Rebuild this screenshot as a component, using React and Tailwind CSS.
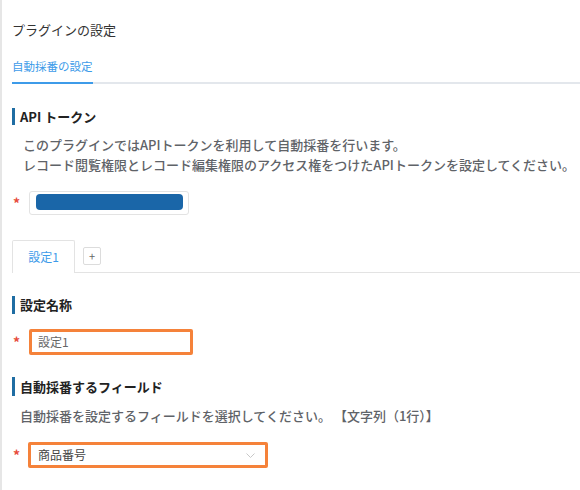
import React from 'react'

const font = { fontFamily: '"Noto Sans CJK JP", "Noto Sans", sans-serif' }

const Heading = ({ children, className = '' }) => (
  <div className={`border-l-[3px] border-[#1f6da3] pl-[5px] text-[13px] font-bold leading-[18px] text-[#222] ${className}`}>
    {children}
  </div>
)

const Required = () => (
  <span className="w-[17px] pl-[1px] text-[14px] font-bold leading-none text-[#e74c3c]">*</span>
)

const App = () => {
  return (
    <div className="min-h-[490px] w-[580px] overflow-hidden border-l-2 border-[#e6e6e6] bg-white pl-[10px]" style={font}>
      <div className="pt-[20px] text-[13px] leading-[20px] text-[#333]">プラグインの設定</div>

      <div className="mt-[16px] flex border-b-2 border-[#e3e7ec]">
        <div className="-mb-[2px] border-b-2 border-[#3d9be9] pb-[6px] text-[11.5px] leading-[20px] text-[#3d9be9]">
          自動採番の設定
        </div>
      </div>

      <Heading className="mt-[24px] h-[17px] leading-[17px]">API トークン</Heading>
      <div className="mt-[10px] ml-[11px] text-[13px] font-medium leading-[20px] text-[#5f6368]">
        <p>このプラグインではAPIトークンを利用して自動採番を行います。</p>
        <p>レコード閲覧権限とレコード編集権限のアクセス権をつけたAPIトークンを設定してください。</p>
      </div>

      <div className="mt-[16px] flex items-center">
        <Required />
        <div className="h-[24px] w-[160px] rounded-[3px] border border-[#e3e3e3] py-[2px] pl-[6px]">
          <div className="h-[16px] w-[147px] rounded-[4px] bg-[#1a66a8]" />
        </div>
      </div>

      <div className="mt-[25px] flex items-center gap-[8px] border-b border-[#e3e3e3]">
        <div className="-mb-px flex h-[33px] w-[63px] items-center justify-center rounded-t-[2px] border border-b-0 border-[#e3e3e3] bg-white text-[12px] text-[#3d9be9]">
          設定1
        </div>
        <button className="flex h-[18px] w-[18px] items-center justify-center rounded-[2px] border border-[#dcdcdc] text-[11px] leading-none text-[#666]">
          +
        </button>
      </div>

      <Heading className="mt-[23px]">設定名称</Heading>
      <div className="mt-[15px] flex items-center">
        <Required />
        <div className="flex h-[26px] w-[164px] items-center rounded-[2px] border-[3px] border-[#f5823a] pl-[6px] text-[12px] text-[#666]">
          設定1
        </div>
      </div>

      <Heading className="mt-[22px] h-[19px] leading-[19px]">自動採番するフィールド</Heading>
      <div className="mt-[10px] ml-[8px] text-[13px] font-medium leading-[20px] text-[#5f6368]">
        自動採番を設定するフィールドを選択してください。 【文字列（1行）】
      </div>

      <div className="mt-[16px] flex items-center">
        <Required />
        <div className="-ml-px flex h-[26px] w-[240px] items-center justify-between rounded-[2px] border-[3px] border-[#f5823a] pl-[7px] pr-[10px] text-[12px] text-[#444]">
          <span>商品番号</span>
          <svg width="9" height="5" viewBox="0 0 9 5" fill="none">
            <path d="M0.5 0.5 L4.5 4.5 L8.5 0.5" stroke="#c8c8c8" strokeWidth="1" />
          </svg>
        </div>
      </div>
    </div>
  )
}

export default App
